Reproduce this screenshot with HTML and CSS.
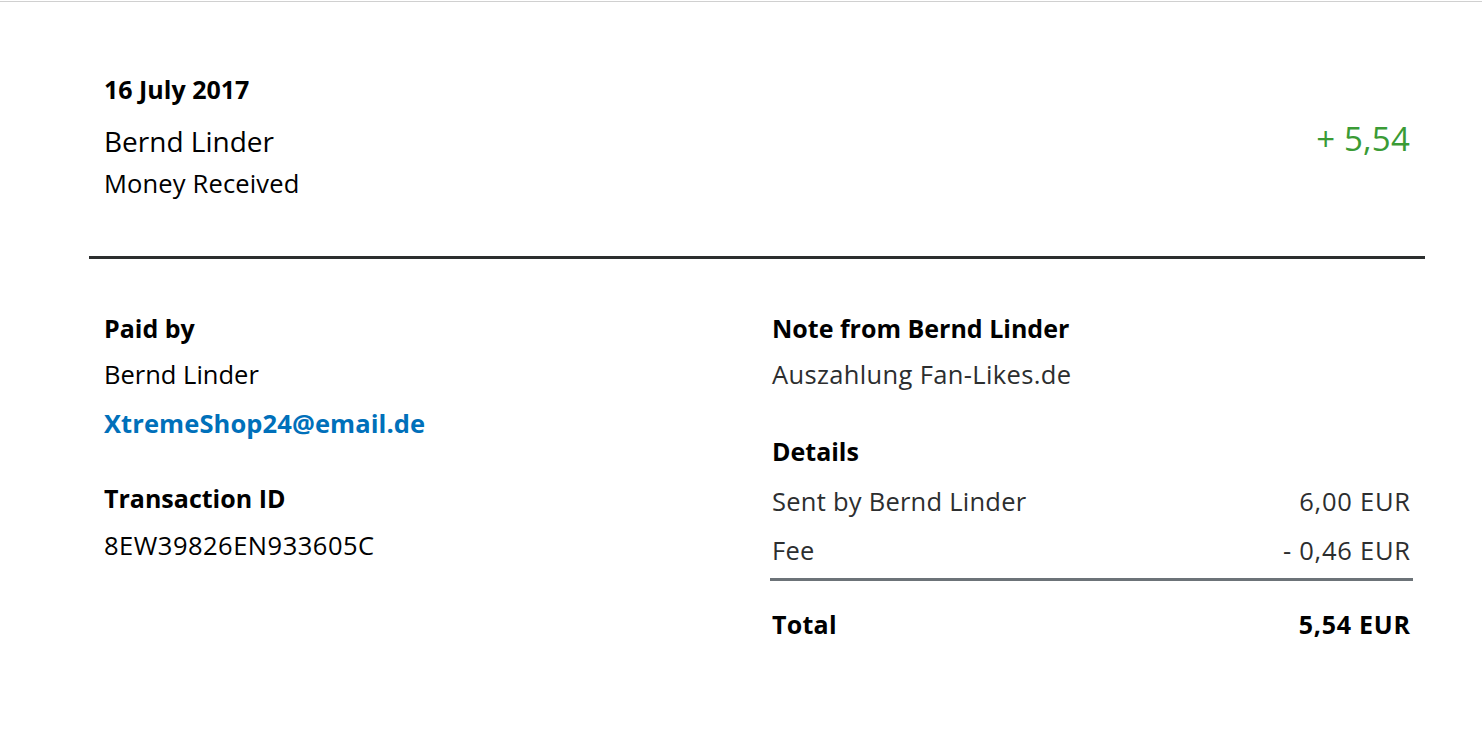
FILE: index.html
```html
<!DOCTYPE html>
<html>
<head>
<meta charset="utf-8">
<link rel="stylesheet" href="styles.css">
</head>
<body>
<div class="page">
  <section class="summary">
    <div class="summary-left">
      <div class="date">16 July 2017</div>
      <div class="name">Bernd Linder</div>
      <div class="type">Money Received</div>
    </div>
    <div class="amount">+ 5,54</div>
  </section>
  <section class="details">
    <div class="col-left">
      <h3 class="label">Paid by</h3>
      <p class="value">Bernd Linder</p>
      <a class="email" href="#">XtremeShop24@email.de</a>
      <h3 class="label label-tx">Transaction ID</h3>
      <p class="value value-id">8EW39826EN933605C</p>
    </div>
    <div class="col-right">
      <h3 class="label">Note from Bernd Linder</h3>
      <p class="value note">Auszahlung Fan-Likes.de</p>
      <h3 class="label label-details">Details</h3>
      <div class="row row-first"><span>Sent by Bernd Linder</span><span class="amt">6,00 EUR</span></div>
      <div class="row row-fee"><span>Fee</span><span class="amt">- 0,46 EUR</span></div>
      <div class="row total"><span>Total</span><span class="amt">5,54 EUR</span></div>
    </div>
  </section>
</div>
</body>
</html>
```
FILE: styles.css
```css
html, body {
  margin: 0;
  padding: 0;
  background: #fff;
}
body {
  font-family: "Open Sans", "Noto Sans", sans-serif;
  color: #000;
  border-top: 1px solid #d0d0d0;
  margin-top: 1px;
}
.page {
  margin: 0 57px 0 89px;
}
.summary {
  display: flex;
  justify-content: space-between;
  align-items: flex-start;
  padding: 70px 15px 56px 15px;
  border-bottom: 3px solid #2c2e2f;
}
.date {
  font-size: 25px;
  font-weight: 700;
  line-height: 34px;
}
.name {
  font-size: 28px;
  line-height: 38px;
  margin-top: 16px;
}
.type {
  font-size: 25.5px;
  line-height: 34px;
  margin-top: 6px;
  letter-spacing: 0.15px;
}
.amount {
  margin-top: 45px;
  font-size: 33px;
  line-height: 44px;
  color: #3a9b35;
  letter-spacing: 0.2px;
}
.details {
  display: grid;
  grid-template-columns: 681px 1fr;
  padding-top: 52px;
}
.col-left {
  padding-left: 15px;
}
.col-right {
  padding-right: 12px;
}
.label {
  margin: 0;
  font-size: 25px;
  font-weight: 700;
  line-height: 34px;
}
.col-right .label {
  padding-left: 2px;
}
.value {
  margin: 12px 0 0;
  font-size: 25.5px;
  line-height: 34px;
}
.email {
  display: block;
  margin-top: 15px;
  font-size: 25.5px;
  line-height: 34px;
  font-weight: 700;
  color: #0070ba;
  text-decoration: none;
  letter-spacing: 0.1px;
}
.label-tx {
  margin-top: 41px;
}
.value-id {
  margin-top: 13px;
  letter-spacing: 0.5px;
}
.col-right .value {
  color: #2c2e2f;
  padding-left: 2px;
  letter-spacing: 0.35px;
}
.label-details {
  margin-top: 43px;
}
.row {
  display: flex;
  justify-content: space-between;
  font-size: 25.5px;
  line-height: 34px;
  padding: 0 3px 0 2px;
  color: #2c2e2f;
  letter-spacing: 0.25px;
}
.row .amt {
  letter-spacing: 0.75px;
  margin-right: -0.75px;
}
.row-first {
  margin-top: 16px;
}
.row-fee {
  margin-top: 15px;
}
.row.total {
  margin-top: 11px;
  padding-top: 26px;
  border-top: 3px solid #6c7378;
  font-size: 25px;
  font-weight: 700;
  color: #000;
}
```
